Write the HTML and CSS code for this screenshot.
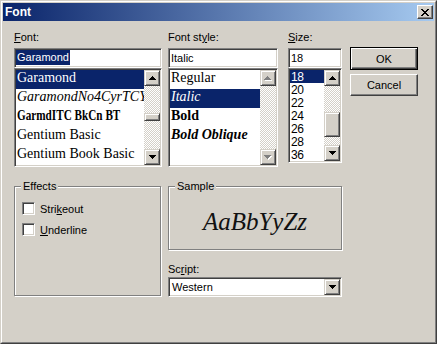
FILE: index.html
```html
<!DOCTYPE html>
<html>
<head>
<meta charset="utf-8">
<title>Font</title>
<link rel="stylesheet" href="styles.css">
</head>
<body>
<div class="window">
  <div class="frame">
    <div class="titlebar">
      <span class="title">Font</span>
      <span class="close"><svg width="8" height="7" viewBox="0 0 8 7" shape-rendering="crispEdges"><path d="M0 0h2v1H0zM6 0h2v1H6zM1 1h2v1H1zM5 1h2v1H5zM2 2h4v1H2zM3 3h2v1H3zM2 4h4v1H2zM1 5h2v1H1zM5 5h2v1H5zM0 6h2v1H0zM6 6h2v1H6z" fill="#000"/></svg></span>
    </div>
    <div class="client">
      <div class="top">
        <div class="col col-font">
          <div class="label"><u>F</u>ont:</div>
          <div class="sunken edit"><span class="hl">Garamond</span></div>
          <div class="sunken list">
            <div class="items">
              <div class="item sel">Garamond</div>
              <div class="item it">GaramondNo4CyrTCYI</div>
              <div class="item bd"><span class="cond">GarmdITC BkCn BT</span></div>
              <div class="item">Gentium Basic</div>
              <div class="item">Gentium Book Basic</div>
            </div>
            <div class="vscroll">
              <div class="arrow"><svg width="7" height="4" viewBox="0 0 7 4" shape-rendering="crispEdges"><path d="M3 0h1v1H3zM2 1h3v1H2zM1 2h5v1H1zM0 3h7v1H0z" fill="#000"/></svg></div>
              <div class="track"><div class="thumb thumb-font"></div></div>
              <div class="arrow"><svg width="7" height="4" viewBox="0 0 7 4" shape-rendering="crispEdges"><path d="M0 0h7v1H0zM1 1h5v1H1zM2 2h3v1H2zM3 3h1v1H3z" fill="#000"/></svg></div>
            </div>
          </div>
        </div>
        <div class="col col-style">
          <div class="label">Font st<u>y</u>le:</div>
          <div class="sunken edit"><span class="txt">Italic</span></div>
          <div class="sunken list">
            <div class="items">
              <div class="item">Regular</div>
              <div class="item it sel">Italic</div>
              <div class="item bd">Bold</div>
              <div class="item bd it">Bold Oblique</div>
            </div>
            <div class="vscroll">
              <div class="arrow"><svg width="8" height="5" viewBox="0 0 8 5" shape-rendering="crispEdges"><path d="M4 1h1v1H4zM3 2h3v1H3zM2 3h5v1H2zM1 4h7v1H1z" fill="#fff"/><path d="M3 0h1v1H3zM2 1h3v1H2zM1 2h5v1H1zM0 3h7v1H0z" fill="#808080"/></svg></div>
              <div class="track"></div>
              <div class="arrow"><svg width="8" height="5" viewBox="0 0 8 5" shape-rendering="crispEdges"><path d="M1 1h7v1H1zM2 2h5v1H2zM3 3h3v1H3zM4 4h1v1H4z" fill="#fff"/><path d="M0 0h7v1H0zM1 1h5v1H1zM2 2h3v1H2zM3 3h1v1H3z" fill="#808080"/></svg></div>
            </div>
          </div>
        </div>
        <div class="col col-size">
          <div class="label"><u>S</u>ize:</div>
          <div class="sunken edit"><span class="txt">18</span></div>
          <div class="sunken list list-size">
            <div class="items">
              <div class="item num sel">18</div>
              <div class="item num">20</div>
              <div class="item num">22</div>
              <div class="item num">24</div>
              <div class="item num">26</div>
              <div class="item num">28</div>
              <div class="item num">36</div>
            </div>
            <div class="vscroll">
              <div class="arrow"><svg width="7" height="4" viewBox="0 0 7 4" shape-rendering="crispEdges"><path d="M3 0h1v1H3zM2 1h3v1H2zM1 2h5v1H1zM0 3h7v1H0z" fill="#000"/></svg></div>
              <div class="track"><div class="thumb thumb-size"></div></div>
              <div class="arrow"><svg width="7" height="4" viewBox="0 0 7 4" shape-rendering="crispEdges"><path d="M0 0h7v1H0zM1 1h5v1H1zM2 2h3v1H2zM3 3h1v1H3z" fill="#000"/></svg></div>
            </div>
          </div>
        </div>
        <div class="buttons">
          <div class="btn btn-default">OK</div>
          <div class="btn">Cancel</div>
        </div>
      </div>
      <div class="bottom">
        <div class="group group-effects">
          <div class="group-title">Effects</div>
          <div class="checks">
            <div class="check-row"><span class="check"></span><span>Stri<u>k</u>eout</span></div>
            <div class="check-row"><span class="check"></span><span><u>U</u>nderline</span></div>
          </div>
        </div>
        <div class="right-col">
          <div class="group group-sample">
            <div class="group-title">Sample</div>
            <div class="sample-text">AaBbYyZz</div>
          </div>
          <div class="label script-label">Sc<u>r</u>ipt:</div>
          <div class="sunken combo">
            <span class="combo-text">Western</span>
            <span class="arrow combo-btn"><svg width="7" height="4" viewBox="0 0 7 4" shape-rendering="crispEdges"><path d="M0 0h7v1H0zM1 1h5v1H1zM2 2h3v1H2zM3 3h1v1H3z" fill="#000"/></svg></span>
          </div>
        </div>
      </div>
    </div>
  </div>
</div>
</body>
</html>
```

FILE: styles.css
```css
* { box-sizing: border-box; }
html, body { margin: 0; padding: 0; }
body {
  width: 437px;
  height: 344px;
  overflow: hidden;
  background: #d4d0c8;
  font: 11px "Liberation Sans", Arial, sans-serif;
  color: #000;
}
.window {
  width: 437px;
  height: 344px;
  border: 1px solid;
  border-color: #d4d0c8 #404040 #404040 #d4d0c8;
  background: #d4d0c8;
}
.frame {
  height: 100%;
  border: 1px solid;
  border-color: #fff #808080 #808080 #fff;
  padding: 1px;
  display: flex;
  flex-direction: column;
}
.titlebar {
  flex: none;
  height: 18px;
  background: linear-gradient(to right, #0a246a, #a6caf0);
  display: flex;
  align-items: center;
  justify-content: space-between;
  padding: 0 1px 0 2px;
}
.title {
  color: #fff;
  font-weight: bold;
  font-size: 12px;
  line-height: 14px;
}
.close {
  width: 16px;
  height: 14px;
  border: 1px solid;
  border-color: #fff #404040 #404040 #fff;
  box-shadow: inset -1px -1px #808080;
  background: #d4d0c8;
  display: flex;
  align-items: center;
  justify-content: center;
}
.close svg, .arrow svg { display: block; }
.client { padding: 10px 0 0 11px; }
.top { display: flex; align-items: flex-start; }
.col-font { width: 148px; margin-right: 6px; }
.col-style { width: 110px; margin-right: 10px; }
.col-size { width: 54px; margin-right: 8px; }
.label {
  height: 17px;
  line-height: 13px;
  white-space: nowrap;
}
.sunken {
  border: 1px solid;
  border-color: #808080 #fff #fff #808080;
  box-shadow: inset 1px 1px #404040, inset -1px -1px #d4d0c8;
  background: #fff;
  padding: 1px;
}
.edit {
  height: 20px;
  line-height: 16px;
  white-space: nowrap;
  overflow: hidden;
}
.hl {
  display: inline-block;
  vertical-align: top;
  line-height: 15px;
  padding: 0 1px;
  background: #0a246a;
  color: #fff;
}
.txt { padding-left: 1px; }
.list {
  height: 99px;
  display: flex;
}
.list-size { height: 95px; }
.items {
  flex: 1;
  min-width: 0;
  overflow: hidden;
  background: #fff;
}
.item {
  height: 19px;
  line-height: 19px;
  padding-left: 1px;
  white-space: nowrap;
  font: 14px "Liberation Serif", "Times New Roman", serif;
}
.item.it { font-style: italic; }
.item.bd { font-weight: bold; }
.item.sel { background: #0a246a; color: #fff; }
.cond {
  display: inline-block;
  transform: scaleX(0.8);
  transform-origin: left center;
}
.item.num {
  height: 13px;
  line-height: 13px;
  font: 12px "Liberation Sans", Arial, sans-serif;
  letter-spacing: -0.5px;
}
.vscroll {
  width: 16px;
  flex: none;
  display: flex;
  flex-direction: column;
}
.arrow {
  flex: none;
  width: 16px;
  height: 16px;
  background: #d4d0c8;
  border: 1px solid;
  border-color: #d4d0c8 #404040 #404040 #d4d0c8;
  box-shadow: inset 1px 1px #fff, inset -1px -1px #808080;
  display: flex;
  align-items: center;
  justify-content: center;
}
.track {
  flex: 1;
  background-color: #fff;
  background-image: conic-gradient(#d4d0c8 25%, #fff 0 50%, #d4d0c8 0 75%, #fff 0);
  background-size: 2px 2px;
}
.thumb {
  background: #d4d0c8;
  border: 1px solid;
  border-color: #d4d0c8 #404040 #404040 #d4d0c8;
  box-shadow: inset 1px 1px #fff, inset -1px -1px #808080;
}
.thumb-font { margin-top: 27px; height: 8px; }
.thumb-size { margin-top: 26px; height: 25px; }
.buttons {
  width: 68px;
  padding-top: 16px;
  display: flex;
  flex-direction: column;
}
.btn {
  height: 22px;
  display: flex;
  align-items: center;
  justify-content: center;
  border: 1px solid;
  border-color: #fff #404040 #404040 #fff;
  box-shadow: inset -1px -1px #808080;
  background: #d4d0c8;
}
.btn-default {
  height: 23px;
  margin-bottom: 4px;
  border-color: #000;
  box-shadow: inset 1px 1px #fff, inset -1px -1px #404040, inset -2px -2px #808080;
}
.bottom {
  display: flex;
  align-items: flex-start;
  margin-top: 13px;
}
.group {
  margin-top: 6px;
  border: 1px solid #808080;
  box-shadow: 1px 1px #fff, inset 1px 1px #fff;
}
.group-title {
  width: fit-content;
  margin: -7px 0 0 6px;
  padding: 0 2px;
  line-height: 13px;
  background: #d4d0c8;
}
.group-effects {
  width: 147px;
  height: 110px;
  margin-right: 7px;
}
.checks { padding-top: 5px; }
.check-row {
  height: 21px;
  display: flex;
  align-items: center;
}
.check {
  width: 13px;
  height: 13px;
  margin: 0 5px 0 7px;
  border: 1px solid;
  border-color: #808080 #fff #fff #808080;
  box-shadow: inset 1px 1px #404040, inset -1px -1px #d4d0c8;
  background: #fff;
}
.right-col { width: 174px; }
.group-sample { height: 64px; }
.sample-text {
  margin-top: 14px;
  text-align: center;
  font: italic 25px/30px "Liberation Serif", "Times New Roman", serif;
  color: #111;
}
.script-label {
  margin-top: 13px;
  height: 14px;
}
.combo {
  height: 20px;
  display: flex;
  align-items: stretch;
}
.combo-text {
  flex: 1;
  padding-left: 2px;
  line-height: 16px;
}
.combo-btn { height: 16px; }
```
